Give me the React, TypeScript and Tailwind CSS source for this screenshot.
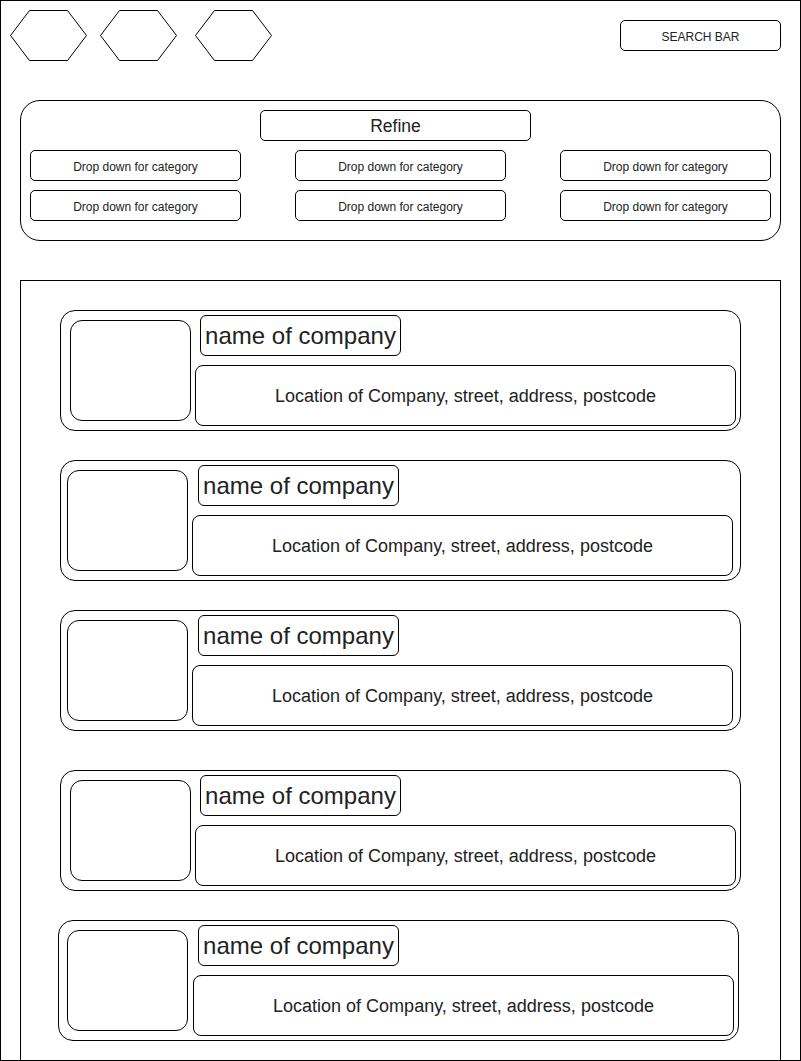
import React from "react";

const font = { fontFamily: '"Liberation Sans", Arial, Helvetica, sans-serif' };

function Hexagon({ className }: { className?: string }) {
  return (
    <svg width="77" height="51" viewBox="0 0 77 51" className={className}>
      <polygon
        points="0.5,25.5 19.5,0.5 57.5,0.5 76.5,25.5 57.5,50.5 19.5,50.5"
        fill="white"
        stroke="black"
        strokeWidth="1"
      />
    </svg>
  );
}

function Dropdown() {
  return (
    <div className="box-border flex h-[31px] w-[211px] items-center justify-center rounded-[5px] border border-black pt-[2px] text-[12px] text-[#222]">
      Drop down for category
    </div>
  );
}

type CardProps = {
  cardMl: string;
  mt: string;
  imgPl: string;
  nameMl: string;
  locMl: string;
};

function CompanyCard({ cardMl, mt, imgPl, nameMl, locMl }: CardProps) {
  return (
    <div
      className={`box-border flex h-[121px] w-[681px] shrink-0 items-start rounded-[15px] border border-black ${cardMl} ${mt} ${imgPl} pt-[9px]`}
    >
      <div className="box-border h-[101px] w-[121px] shrink-0 rounded-[12px] border border-black" />
      <div className="-mt-[5px] flex flex-col">
        <div
          className={`box-border flex h-[41px] w-[201px] items-center justify-center rounded-[6px] border border-black text-[24px] text-[#222] ${nameMl}`}
        >
          name of company
        </div>
        <div
          className={`mt-[9px] box-border flex h-[61px] w-[541px] items-center justify-center rounded-[8px] border border-black pt-[2px] text-[18px] text-[#222] ${locMl}`}
        >
          Location of Company, street, address, postcode
        </div>
      </div>
    </div>
  );
}

export default function App() {
  return (
    <div
      style={font}
      className="box-border h-[1061px] w-[801px] overflow-hidden border border-black bg-white"
    >
      {/* Header */}
      <div className="flex h-[99px] items-start pl-[9px]">
        <Hexagon className="mt-[9px]" />
        <Hexagon className="ml-[13px] mt-[9px]" />
        <Hexagon className="ml-[18px] mt-[9px]" />
        <div className="mr-[19px] ml-auto mt-[19px] box-border flex h-[31px] w-[161px] items-center justify-center rounded-[5px] border border-black pt-[2px] text-[12px] text-[#222]">
          SEARCH BAR
        </div>
      </div>

      {/* Refine panel */}
      <div className="ml-[19px] box-border h-[141px] w-[761px] rounded-[20px] border border-black pl-[9px] pt-[9px]">
        <div className="ml-[230px] box-border flex h-[31px] w-[271px] items-center justify-center rounded-[5px] border border-black pt-[2px] text-[17.5px] text-[#222]">
          Refine
        </div>
        <div className="mt-[9px] grid grid-cols-[211px_211px_211px] gap-x-[54px] gap-y-[9px]">
          <Dropdown />
          <Dropdown />
          <Dropdown />
          <Dropdown />
          <Dropdown />
          <Dropdown />
        </div>
      </div>

      {/* Company list */}
      <div className="ml-[19px] mt-[39px] box-border flex h-[820px] w-[761px] flex-col border border-black pt-[29px]">
        <CompanyCard cardMl="ml-[39px]" mt="mt-0" imgPl="pl-[9px]" nameMl="ml-[9px]" locMl="ml-[4px]" />
        <CompanyCard cardMl="ml-[39px]" mt="mt-[29px]" imgPl="pl-[6px]" nameMl="ml-[10px]" locMl="ml-[4px]" />
        <CompanyCard cardMl="ml-[39px]" mt="mt-[29px]" imgPl="pl-[6px]" nameMl="ml-[10px]" locMl="ml-[4px]" />
        <CompanyCard cardMl="ml-[39px]" mt="mt-[39px]" imgPl="pl-[9px]" nameMl="ml-[9px]" locMl="ml-[4px]" />
        <CompanyCard cardMl="ml-[37px]" mt="mt-[29px]" imgPl="pl-[8px]" nameMl="ml-[10px]" locMl="ml-[5px]" />
      </div>
    </div>
  );
}
